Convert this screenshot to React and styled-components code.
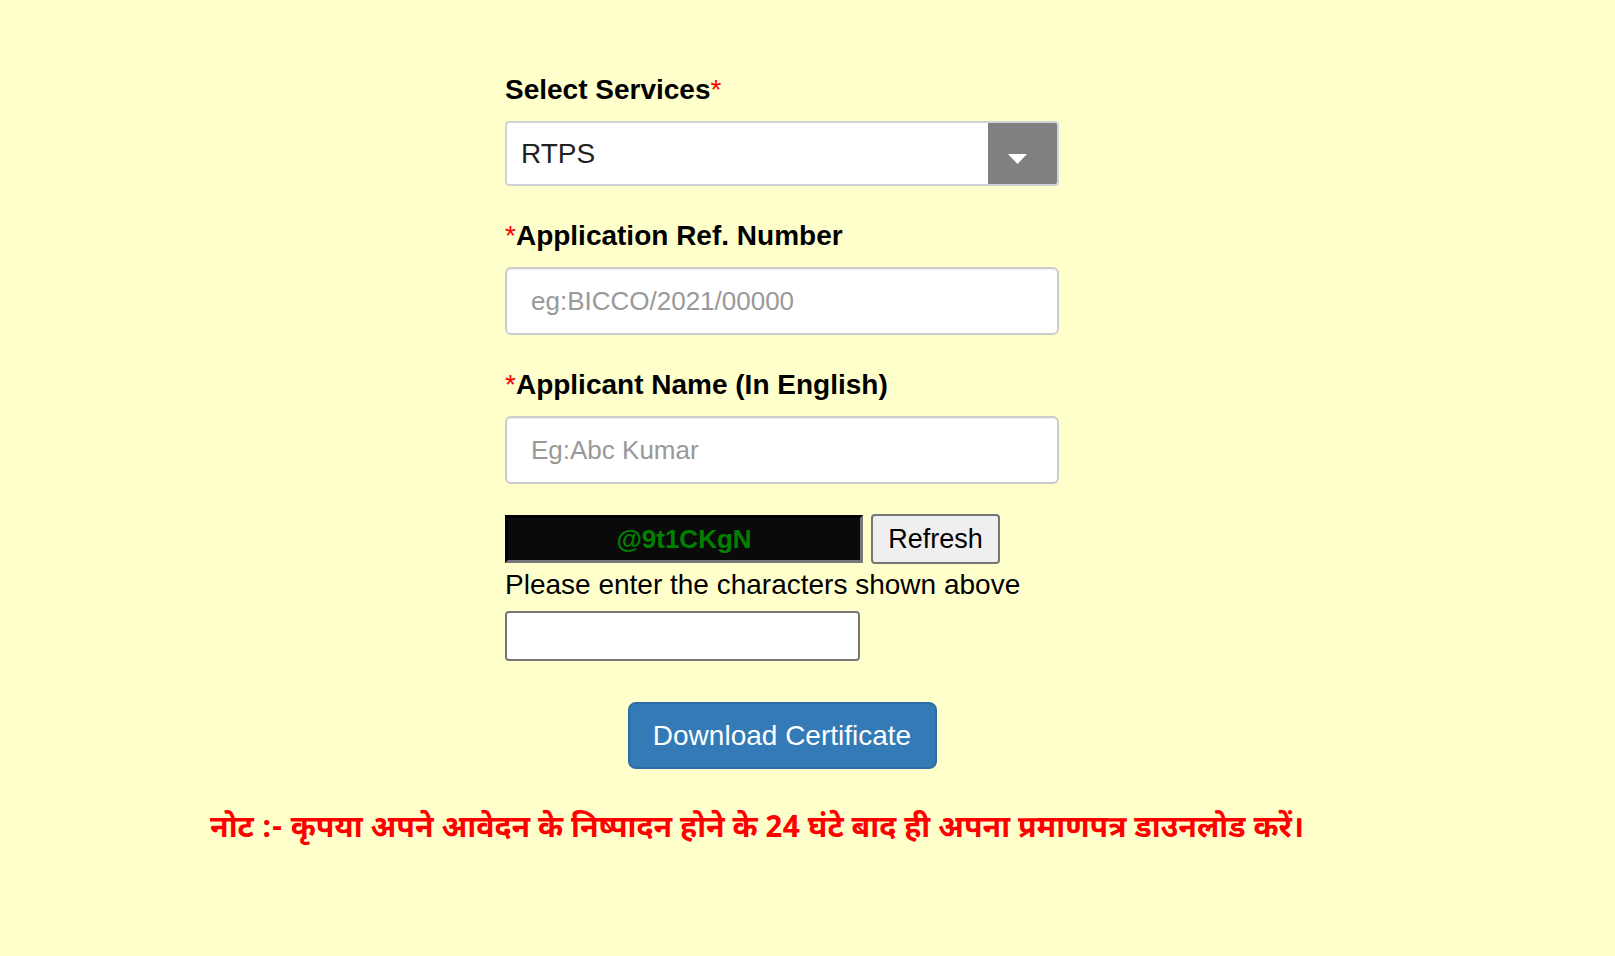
import React, { useState } from 'react';
import styled, { createGlobalStyle } from 'styled-components';

const GlobalStyle = createGlobalStyle`
    html, body {
        margin: 0;
        padding: 0;
        background-color: #ffffcc;
        font-family: "Liberation Sans", Arial, sans-serif;
    }
    * {
        box-sizing: border-box;
    }
`;

const Page = styled.div`
    min-height: 100vh;
    background-color: #ffffcc;
    display: flex;
    flex-direction: column;
    padding-top: 70px;
`;

const Form = styled.div`
    width: 554px;
    margin-left: 505px;
    display: flex;
    flex-direction: column;
`;

const FormGroup = styled.div`
    display: flex;
    flex-direction: column;
    margin-bottom: ${props => props.gap || 30}px;
`;

const Label = styled.label`
    font-size: 28px;
    font-weight: bold;
    line-height: 40px;
    color: #000;
    margin-bottom: 11px;
`;

const Star = styled.span`
    color: #ff0000;
    font-weight: normal;
`;

const SelectBox = styled.div`
    display: flex;
    height: 65px;
    border: 2px solid #cfd2d6;
    border-radius: 4px;
    background: #fff;
    overflow: hidden;
    cursor: pointer;
`;

const SelectValue = styled.div`
    flex: 1;
    display: flex;
    align-items: center;
    padding-left: 14px;
    font-size: 28px;
    color: #222;
`;

const ArrowBox = styled.div`
    width: 69px;
    background: #808080;
    display: flex;
    align-items: center;
    justify-content: center;
    padding: 10px 10px 0 0;
`;

const TextInput = styled.input`
    height: 68px;
    width: 100%;
    border: 2px solid #cccccc;
    border-radius: 6px;
    background: #fff;
    padding: 0 24px;
    font-size: 26px;
    font-family: "Liberation Sans", Arial, sans-serif;
    color: #555;
    box-shadow: inset 0 1px 1px rgba(0, 0, 0, 0.075);
    outline: none;
    &::placeholder {
        color: #999;
    }
`;

const CaptchaRow = styled.div`
    display: flex;
    align-items: center;
    gap: 8px;
    height: 50px;
`;

const CaptchaImage = styled.div`
    width: 358px;
    height: 48px;
    background: #0a0a0a;
    border: 3px inset #777;
    border-top-color: #222;
    border-left-color: #222;
    border-right-color: #777;
    border-bottom-color: #777;
    color: #008000;
    font-size: 26px;
    font-weight: bold;
    display: flex;
    align-items: center;
    justify-content: center;
    user-select: none;
`;

const RefreshButton = styled.button`
    width: 129px;
    height: 50px;
    background: #efefef;
    border: 2px solid #767676;
    border-radius: 4px;
    font-size: 27px;
    font-family: "Liberation Sans", Arial, sans-serif;
    color: #000;
    padding: 0;
    cursor: pointer;
`;

const Hint = styled.div`
    font-size: 28px;
    line-height: 40px;
    color: #000;
    margin-top: 1px;
`;

const CaptchaInput = styled.input`
    width: 355px;
    height: 50px;
    margin-top: 6px;
    border: 2px solid #767676;
    border-radius: 4px;
    background: #fff;
    font-size: 24px;
    padding: 0 8px;
    outline: none;
`;

const ButtonRow = styled.div`
    display: flex;
    justify-content: center;
    margin-top: 41px;
`;

const DownloadButton = styled.button`
    width: 309px;
    height: 67px;
    background: #337ab7;
    border: 2px solid #2e6da4;
    border-radius: 8px;
    color: #fff;
    font-size: 28px;
    font-family: "Liberation Sans", Arial, sans-serif;
    cursor: pointer;
    padding: 0;
`;

const Note = styled.div`
    margin-left: 210px;
    margin-top: 39px;
    font-size: 30.3px;
    line-height: 44px;
    font-weight: bold;
    color: #ff0000;
    font-family: "Noto Sans Devanagari", "Noto Sans", "Liberation Sans", sans-serif;
    white-space: nowrap;
`;

function CaretDown() {
    return (
        <svg width="19" height="10" viewBox="0 0 19 10">
            <polygon points="0,0 19,0 9.5,10" fill="#fff" />
        </svg>
    );
}

export default function App() {
    const [refNo, setRefNo] = useState('');
    const [name, setName] = useState('');
    const [code, setCode] = useState('');

    return (
        <>
            <GlobalStyle />
            <Page>
                <Form>
                    <FormGroup>
                        <Label>Select Services<Star>*</Star></Label>
                        <SelectBox>
                            <SelectValue>RTPS</SelectValue>
                            <ArrowBox><CaretDown /></ArrowBox>
                        </SelectBox>
                    </FormGroup>
                    <FormGroup>
                        <Label><Star>*</Star>Application Ref. Number</Label>
                        <TextInput
                            placeholder="eg:BICCO/2021/00000"
                            value={refNo}
                            onChange={e => setRefNo(e.target.value)}
                        />
                    </FormGroup>
                    <FormGroup>
                        <Label><Star>*</Star>Applicant Name (In English)</Label>
                        <TextInput
                            placeholder="Eg:Abc Kumar"
                            value={name}
                            onChange={e => setName(e.target.value)}
                        />
                    </FormGroup>
                    <CaptchaRow>
                        <CaptchaImage>@9t1CKgN</CaptchaImage>
                        <RefreshButton>Refresh</RefreshButton>
                    </CaptchaRow>
                    <Hint>Please enter the characters shown above</Hint>
                    <CaptchaInput value={code} onChange={e => setCode(e.target.value)} />
                    <ButtonRow>
                        <DownloadButton>Download Certificate</DownloadButton>
                    </ButtonRow>
                </Form>
                <Note>नोट :- कृपया अपने आवेदन के निष्पादन होने के 24 घंटे बाद ही अपना प्रमाणपत्र डाउनलोड करें।</Note>
            </Page>
        </>
    );
}
